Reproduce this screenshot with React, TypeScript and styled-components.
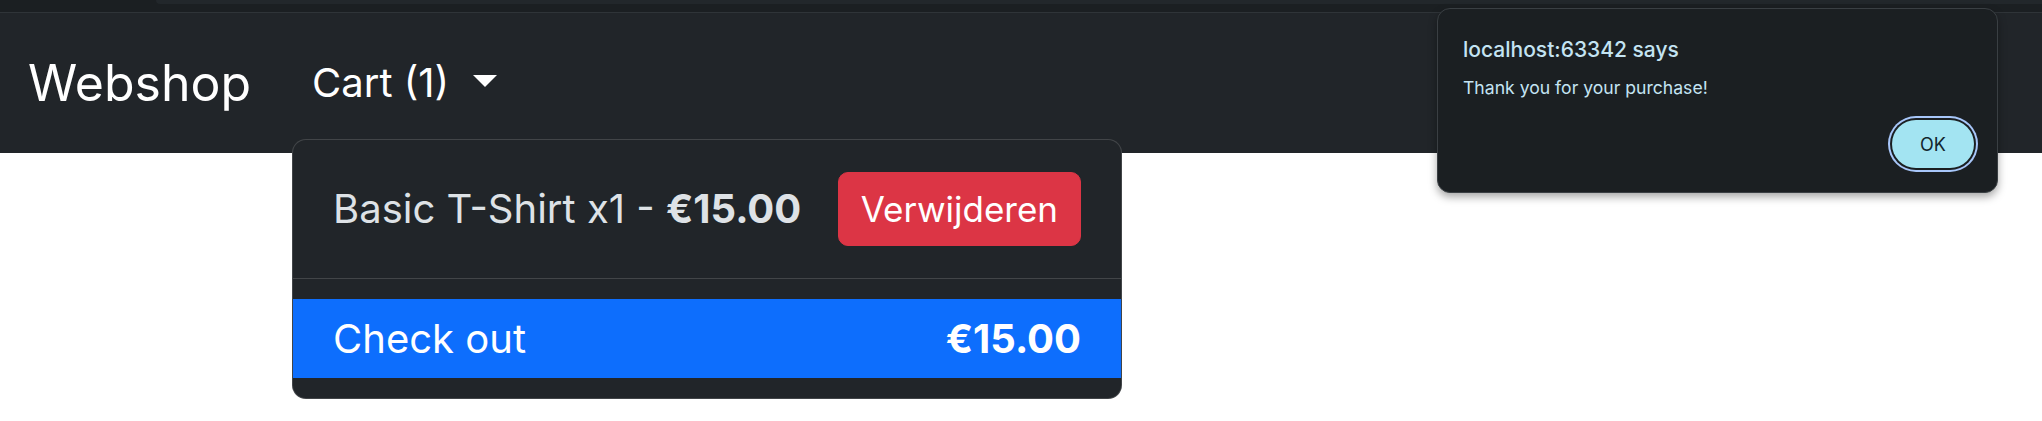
import styled, { createGlobalStyle } from 'styled-components';

const GlobalStyle = createGlobalStyle`
    body {
        margin: 0;
        background-color: #fff;
        font-family: Inter, "Noto Sans", sans-serif;
    }
`;

const Page = styled.div`
    position: relative;
    width: 2042px;
    height: 421px;
    overflow: hidden;
`;

const BrowserBar = styled.div`
    display: flex;
    height: 12px;
    padding-left: 156px;
    background-color: #1b1f22;
    border-bottom: 1px solid #2f3438;
`;

const TabEdge = styled.div`
    flex: 1;
    height: 4px;
    background-color: #22272b;
    border-bottom-left-radius: 6px;
`;

const Navbar = styled.nav`
    display: flex;
    align-items: center;
    height: 140px;
    box-sizing: border-box;
    padding: 20px 30px 20px 28px;
    background-color: #212529;
`;

const Brand = styled.a`
    font-size: 50px;
    line-height: 75px;
    padding: 12.5px 0;
    margin-right: 41px;
    color: #fff;
    text-decoration: none;
`;

const NavItem = styled.div`
    position: relative;
`;

const NavLink = styled.a`
    display: block;
    padding: 20px;
    font-size: 40px;
    line-height: 60px;
    color: #fff;
    text-decoration: none;

    &::after {
        content: '';
        display: inline-block;
        margin-left: 24px;
        vertical-align: 10px;
        border-top: 12px solid #fff;
        border-left: 12px solid transparent;
        border-right: 12px solid transparent;
    }
`;

const DropdownMenu = styled.div`
    position: absolute;
    top: calc(100% + 6px);
    left: 0;
    width: 830px;
    box-sizing: border-box;
    padding: 20px 0;
    background-color: #212529;
    border: 1px solid rgba(255, 255, 255, 0.15);
    border-radius: 14px;
    color: #dee2e6;
    font-size: 40px;
    z-index: 2;
`;

const CartRow = styled.div`
    display: flex;
    justify-content: space-between;
    align-items: center;
    height: 98px;
    box-sizing: border-box;
    padding: 10px 40px;
    line-height: 60px;
`;

const RemoveButton = styled.button`
    font-family: inherit;
    font-size: 35px;
    line-height: 1.5;
    padding: 10px 22px;
    color: #fff;
    background-color: #dc3545;
    border: 1px solid #dc3545;
    border-radius: 10px;
`;

const Divider = styled.hr`
    margin: 20px 0;
    height: 0;
    border: none;
    border-top: 1px solid rgba(255, 255, 255, 0.15);
`;

const DropdownItem = styled.div<{ $active?: boolean }>`
    display: flex;
    justify-content: space-between;
    padding: 10px 40px;
    line-height: 59px;
    color: ${p => (p.$active ? '#fff' : '#dee2e6')};
    background-color: ${p => (p.$active ? '#0d6efd' : 'transparent')};
`;

const Dialog = styled.div`
    position: absolute;
    top: 8px;
    right: 44px;
    width: 561px;
    height: 185px;
    box-sizing: border-box;
    display: flex;
    flex-direction: column;
    padding: 28px 23px 24px 25px;
    background-color: #1b1f22;
    border: 1px solid #3a3f43;
    border-radius: 13px;
    box-shadow: 0 4px 8px rgba(0, 0, 0, 0.35);
    color: #c4e4f3;
    z-index: 3;
`;

const DialogTitle = styled.div`
    font-size: 21px;
    line-height: 26px;
    font-weight: 500;
`;

const DialogMessage = styled.div`
    margin-top: 14px;
    font-size: 17.6px;
    line-height: 22px;
`;

const DialogActions = styled.div`
    display: flex;
    justify-content: flex-end;
    margin-top: auto;
`;

const OkButton = styled.button`
    width: 82px;
    height: 48px;
    font-family: inherit;
    font-size: 18px;
    color: #12262e;
    background-color: #a3e4f2;
    border: none;
    border-radius: 24px;
    box-shadow: 0 0 0 2px #1b1f22, 0 0 0 4px #a8c7fa;
`;

export default function App() {
    return (
        <>
            <GlobalStyle />
            <Page>
                <BrowserBar>
                    <TabEdge />
                </BrowserBar>
                <Navbar>
                    <Brand>Webshop</Brand>
                    <NavItem>
                        <NavLink>Cart (1)</NavLink>
                        <DropdownMenu>
                            <CartRow>
                                <span>
                                    Basic T-Shirt x1 - <strong>€15.00</strong>
                                </span>
                                <RemoveButton>Verwijderen</RemoveButton>
                            </CartRow>
                            <Divider />
                            <DropdownItem $active>
                                <span>Check out</span>
                                <strong>€15.00</strong>
                            </DropdownItem>
                        </DropdownMenu>
                    </NavItem>
                </Navbar>
                <Dialog>
                    <DialogTitle>localhost:63342 says</DialogTitle>
                    <DialogMessage>Thank you for your purchase!</DialogMessage>
                    <DialogActions>
                        <OkButton>OK</OkButton>
                    </DialogActions>
                </Dialog>
            </Page>
        </>
    );
}
